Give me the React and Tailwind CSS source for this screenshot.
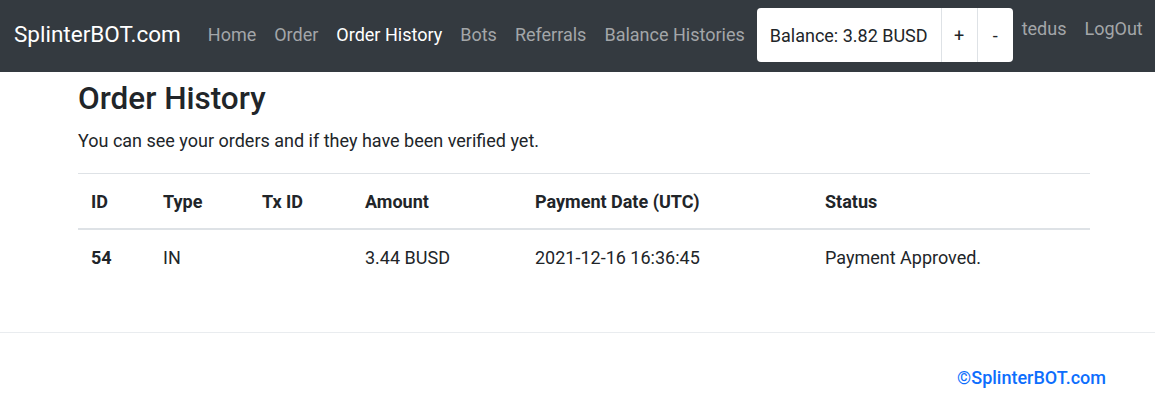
export default function App() {
  const links = [
    { name: 'Home', active: false },
    { name: 'Order', active: false },
    { name: 'Order History', active: true },
    { name: 'Bots', active: false },
    { name: 'Referrals', active: false },
    { name: 'Balance Histories', active: false },
  ];

  return (
    <div className="min-h-screen bg-white text-[#212529]" style={{ fontFamily: 'Roboto, "Liberation Sans", sans-serif' }}>
      <nav className="h-[72px] bg-[#343a40] flex items-start pl-[14px] pr-[12px] whitespace-nowrap">
        <a className="shrink-0 text-white text-[22.5px] leading-none mt-[23px] mr-[18px]">SplinterBOT.com</a>
        <ul className="flex shrink-0 mt-[25px]">
          {links.map((l) => (
            <li key={l.name}>
              <a className={`block px-[9px] text-[18px] leading-[20px] ${l.active ? 'text-white' : 'text-[#a3a6a9]'}`}>{l.name}</a>
            </li>
          ))}
        </ul>
        <div className="shrink-0 ml-[3px] mt-[8px] h-[54px] flex bg-white rounded-[4px] text-[18px] text-[#212529]">
          <div className="pl-[13px] pr-[13px] flex items-center">Balance: 3.82 BUSD</div>
          <div className="w-[36px] flex items-center justify-center border-l border-[#dee2e6]">+</div>
          <div className="w-[36px] flex items-center justify-center border-l border-[#dee2e6]">-</div>
        </div>
        <ul className="flex shrink-0 mt-[19px]">
          <li><a className="block px-[9px] text-[18px] leading-[20px] text-[#a3a6a9]">tedus</a></li>
          <li><a className="block px-[9px] pr-0 text-[18px] leading-[20px] text-[#a3a6a9]">LogOut</a></li>
        </ul>
      </nav>

      <main className="ml-[78px] w-[1012px]">
        <h2 className="text-[31.5px] font-medium leading-[1.2] mt-[8px]">Order History</h2>
        <p className="text-[18px] mt-[11px] leading-[24px]">You can see your orders and if they have been verified yet.</p>
        <table className="w-full mt-[20px] text-[18px] border-collapse">
          <thead>
            <tr className="border-t border-[#dee2e6] border-b-2 border-b-[#dee2e6]">
              <th className="w-[72px] text-left font-bold px-[13px] h-[56px]">ID</th>
              <th className="w-[99px] text-left font-bold px-[13px]">Type</th>
              <th className="w-[103px] text-left font-bold px-[13px]">Tx ID</th>
              <th className="w-[170px] text-left font-bold px-[13px]">Amount</th>
              <th className="w-[290px] text-left font-bold px-[13px]">Payment Date (UTC)</th>
              <th className="text-left font-bold px-[13px]">Status</th>
            </tr>
          </thead>
          <tbody>
            <tr>
              <td className="px-[13px] h-[55px] font-bold">54</td>
              <td className="px-[13px]">IN</td>
              <td className="px-[13px]"></td>
              <td className="px-[13px]">3.44 BUSD</td>
              <td className="px-[13px]">2021-12-16 16:36:45</td>
              <td className="px-[13px]">Payment Approved.</td>
            </tr>
          </tbody>
        </table>
      </main>

      <footer className="mt-[48px] border-t border-[#e9ecef] h-[90px] flex items-center justify-end pr-[49px]">
        <a className="text-[#0d6efd] text-[18px] font-medium">©SplinterBOT.com</a>
      </footer>
    </div>
  );
}
